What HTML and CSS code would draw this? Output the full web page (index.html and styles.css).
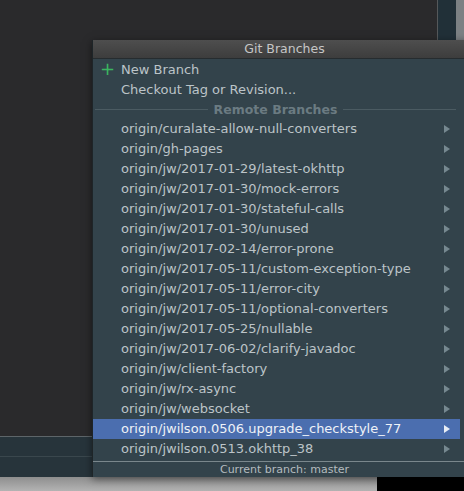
FILE: index.html
```html
<!DOCTYPE html>
<html>
<head>
<meta charset="utf-8">
<link rel="stylesheet" href="styles.css">
</head>
<body>
<div class="screen">
  <div class="top">
    <div class="editor"></div>
    <div class="strip"></div>
    <div class="edge"></div>
  </div>
  <div class="panel">
    <div class="panel-row"></div>
  </div>
  <div class="bottom">
    <div class="status"></div>
    <div class="black"></div>
  </div>

  <div class="popup">
    <div class="title">Git Branches</div>
    <div class="list">
      <div class="item"><span class="plus">+</span>New Branch</div>
      <div class="item">Checkout Tag or Revision...</div>
      <div class="header"><span class="rule"></span><span class="htext">Remote Branches</span><span class="rule"></span></div>
      <div class="item branch">origin/curalate-allow-null-converters<span class="arrow"></span></div>
      <div class="item branch">origin/gh-pages<span class="arrow"></span></div>
      <div class="item branch">origin/jw/2017-01-29/latest-okhttp<span class="arrow"></span></div>
      <div class="item branch">origin/jw/2017-01-30/mock-errors<span class="arrow"></span></div>
      <div class="item branch">origin/jw/2017-01-30/stateful-calls<span class="arrow"></span></div>
      <div class="item branch">origin/jw/2017-01-30/unused<span class="arrow"></span></div>
      <div class="item branch">origin/jw/2017-02-14/error-prone<span class="arrow"></span></div>
      <div class="item branch">origin/jw/2017-05-11/custom-exception-type<span class="arrow"></span></div>
      <div class="item branch">origin/jw/2017-05-11/error-city<span class="arrow"></span></div>
      <div class="item branch">origin/jw/2017-05-11/optional-converters<span class="arrow"></span></div>
      <div class="item branch">origin/jw/2017-05-25/nullable<span class="arrow"></span></div>
      <div class="item branch">origin/jw/2017-06-02/clarify-javadoc<span class="arrow"></span></div>
      <div class="item branch">origin/jw/client-factory<span class="arrow"></span></div>
      <div class="item branch">origin/jw/rx-async<span class="arrow"></span></div>
      <div class="item branch">origin/jw/websocket<span class="arrow"></span></div>
      <div class="item branch selected">origin/jwilson.0506.upgrade_checkstyle_77<span class="arrow"></span></div>
      <div class="item branch">origin/jwilson.0513.okhttp_38<span class="arrow"></span></div>
    </div>
    <div class="footer">Current branch: master</div>
  </div>
</div>
</body>
</html>
```

FILE: styles.css
```css
html, body {
  margin: 0;
  padding: 0;
  background: #2b2b2d;
  overflow: hidden;
}

.screen {
  position: relative;
  width: 464px;
  height: 491px;
  display: flex;
  flex-direction: column;
  font-family: "DejaVu Sans", "Liberation Sans", sans-serif;
}

.top {
  height: 436px;
  display: flex;
}

.editor {
  flex: 0 0 437px;
  background: #2a2a2c;
  border-right: 1px solid #55585a;
}

.strip {
  flex: 0 0 18px;
  background: #213038;
}

.edge {
  flex: 1;
  background: #7c8184;
}

.panel {
  height: 41px;
  background: #27343b;
  border-top: 1px solid #5d6569;
  box-sizing: border-box;
}

.panel-row {
  height: 19px;
  border-bottom: 1px solid #3a474d;
}

.bottom {
  flex: 1;
  display: flex;
}

.status {
  flex: 0 0 377px;
  background: linear-gradient(#8e8e8e, #b3b3b3);
}

.black {
  flex: 1;
  background: #000;
}

.popup {
  position: absolute;
  left: 92px;
  top: 40px;
  width: 384px;
  height: 437px;
  background: #33434b;
  border-left: 1px solid #1e2528;
  box-sizing: border-box;
  display: flex;
  flex-direction: column;
  box-shadow: 0 2px 8px rgba(0, 0, 0, 0.5);
}

.title {
  height: 18px;
  line-height: 18px;
  background: linear-gradient(#4e4e4e, #3d3d3d);
  border-bottom: 1px solid #262c2f;
  color: #c6c6c6;
  font-size: 12.5px;
  text-align: center;
}

.list {
  padding-top: 1px;
  display: flex;
  flex-direction: column;
}

.item {
  position: relative;
  height: 20px;
  line-height: 20px;
  padding-left: 28px;
  margin-right: 16px;
  color: #bcc4c8;
  font-size: 13px;
  white-space: nowrap;
}

.plus {
  position: absolute;
  left: 7px;
  top: -1px;
  color: #3bb560;
  font-size: 18px;
}

.header {
  height: 19px;
  display: flex;
  align-items: center;
  gap: 6px;
  padding-left: 2px;
  margin-right: 20px;
}

.rule {
  flex: 1;
  height: 1px;
  background: #4b5b62;
}

.htext {
  color: #6b7b82;
  font-size: 12.5px;
  font-weight: bold;
}

.selected {
  background: #4b6eaf;
  color: #eef2f8;
}

.arrow {
  position: absolute;
  right: 10px;
  top: 6px;
  width: 0;
  height: 0;
  border-top: 4px solid transparent;
  border-bottom: 4px solid transparent;
  border-left: 6px solid #768890;
}

.selected .arrow {
  border-left-color: #e8eef6;
}

.footer {
  margin-top: 2px;
  height: 16px;
  line-height: 16px;
  border-top: 1px solid #7a878c;
  color: #b3bbbf;
  font-size: 11px;
  text-align: center;
}
```
